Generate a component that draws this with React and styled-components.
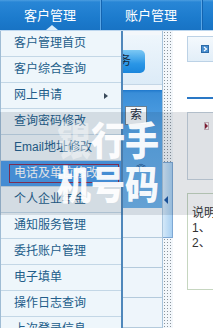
import React from 'react';
import styled, { createGlobalStyle } from 'styled-components';

const GlobalStyle = createGlobalStyle`
  html, body {
    margin: 0;
    padding: 0;
    background: #f3f7fb;
    overflow: hidden;
  }
  body {
    font-family: "Liberation Sans", "Noto Sans CJK SC", sans-serif;
    font-size: 12px;
  }
`;

const menuItems = [
  { label: '客户管理首页' },
  { label: '客户综合查询' },
  { label: '网上申请', sub: true },
  { label: '查询密码修改' },
  { label: 'Email地址修改' },
  { label: '电话及单位修改', active: true },
  { label: '个人企业年金' },
  { label: '通知服务管理' },
  { label: '委托账户管理' },
  { label: '电子填单' },
  { label: '操作日志查询' },
  { label: '上次登录信息' },
];

const App = () => (
  <Page>
    <GlobalStyle />
    <NavBar>
      <Tab $current>客户管理</Tab>
      <Tab>账户管理</Tab>
      <Tab />
    </NavBar>
    <Body>
      <Sidebar>
        <TopBox>
          <BlueButton>服务</BlueButton>
        </TopBox>
        <SearchPanel>
          <SearchButton>索</SearchButton>
          <Chevron>︽</Chevron>
          <Chevron $down>︾</Chevron>
        </SearchPanel>
        <TableRow />
        <TableRow />
        <TableRow />
        <TableRow />
      </Sidebar>
      <Splitter>
        <Handle>
          <LeftArrow />
        </Handle>
      </Splitter>
      <Main>
        <ToolBox>
          <GoIcon>
            <svg width="8" height="8" viewBox="0 0 8 8">
              <rect x="0.5" y="0.5" width="7" height="7" fill="#4a8fd0" stroke="#2a6aa8" />
              <path d="M3 2 L5.5 4 L3 6" stroke="#fff" strokeWidth="1.2" fill="none" />
            </svg>
          </GoIcon>
        </ToolBox>
        <BlueRule />
        <InfoBox>
          <MarkIcon />
        </InfoBox>
        <NoteBox>
          <NoteLine>说明：</NoteLine>
          <NoteLine>1、</NoteLine>
          <NoteLine>2、</NoteLine>
        </NoteBox>
      </Main>
    </Body>

    <Menu>
      {menuItems.map((item) => (
        <MenuItem key={item.label} $active={item.active}>
          <ItemLabel $active={item.active}>{item.label}</ItemLabel>
          {item.sub && <SubArrow />}
        </MenuItem>
      ))}
    </Menu>

    <Shade />
    <Watermark>
      <WmLine>
        <Faint>银</Faint>行手
      </WmLine>
      <WmLine>机号码</WmLine>
    </Watermark>
  </Page>
);

export default App;

const Page = styled.div`
  position: relative;
  width: 213px;
  height: 328px;
  overflow: hidden;
  background: #f3f7fb;
`;

const NavBar = styled.div`
  display: flex;
  height: 31px;
  background: linear-gradient(#4b9de0 0, #2886d6 2px, #1c7bcd 60%, #1873c4 100%);
  border-bottom: 1px solid #bcd6ee;
  box-sizing: border-box;
`;

const Tab = styled.div`
  position: relative;
  width: 101px;
  flex: none;
  display: flex;
  align-items: center;
  justify-content: center;
  padding-bottom: 2px;
  box-sizing: border-box;
  color: #fff;
  font-size: 13px;
  border-right: 1px solid #5aa6e6;
  box-shadow: 1px 0 0 #1464b0;

  &:after {
    content: ${(p) => (p.$current ? "''" : 'none')};
    position: absolute;
    left: 46px;
    bottom: 0;
    border-left: 6px solid transparent;
    border-right: 6px solid transparent;
    border-bottom: 5px solid #d8ecfa;
  }
`;

const Body = styled.div`
  display: flex;
  height: 297px;
`;

const Sidebar = styled.div`
  width: 163px;
  flex: none;
  display: flex;
  flex-direction: column;
  padding-top: 4px;
  box-sizing: border-box;
  border-right: 1px solid #a8c4dc;
`;

const TopBox = styled.div`
  height: 51px;
  display: flex;
  align-items: flex-start;
  padding-top: 15px;
  box-sizing: border-box;
  background: linear-gradient(#eef6fc, #dcebf7);
  border-bottom: 1px solid #c4d6e6;
`;

const BlueButton = styled.div`
  margin-left: 100px;
  width: 45px;
  height: 23px;
  border-radius: 5px;
  background: linear-gradient(#7cc8f4, #2a96e6 60%, #1a86dc);
  color: #1a2a3a;
  font-size: 12px;
  line-height: 23px;
  text-align: right;
  padding-right: 14px;
  box-sizing: border-box;
`;

const SearchPanel = styled.div`
  margin-top: 5px;
  height: 122px;
  display: flex;
  flex-direction: column;
  align-items: flex-end;
  padding: 16px 14px 0 0;
  box-sizing: border-box;
  background: linear-gradient(#1f78cc 0, #3a8ed8 3px, #5aa6e6 40%, #6fb2ea);
  border-left: 2px solid #1d6cb8;
`;

const SearchButton = styled.div`
  width: 20px;
  height: 17px;
  border: 1px solid #6b7f90;
  background: #f4f8fb;
  color: #1a2a3a;
  font-size: 12px;
  line-height: 17px;
  text-align: center;
  margin-right: 1px;
`;

const Chevron = styled.div`
  font-size: 10px;
  color: #14407a;
  line-height: 10px;
  margin-right: 2px;
  margin-top: ${(p) => (p.$down ? '24px' : '34px')};
`;

const TableRow = styled.div`
  height: 29px;
  flex: none;
  border-bottom: 1px solid #b4cadc;
  background: #eef5fb;
`;

const Splitter = styled.div`
  width: 10px;
  flex: none;
  padding-top: 131px;
  box-sizing: border-box;
  background-image: radial-gradient(circle, #8a949c 0.7px, transparent 0.9px);
  background-size: 3px 3px;
`;

const Handle = styled.div`
  height: 76px;
  display: flex;
  align-items: center;
  justify-content: flex-start;
  padding-left: 1px;
  box-sizing: border-box;
  background: linear-gradient(90deg, #d4e8f8, #a8d0f2);
  border: 1px solid #7ea8d4;
  border-left: none;
`;

const LeftArrow = styled.span`
  border-right: 4px solid #1a56a4;
  border-top: 4px solid transparent;
  border-bottom: 4px solid transparent;
`;

const Main = styled.div`
  flex: 1;
  display: flex;
  flex-direction: column;
  padding: 5px 0 0 14px;
  box-sizing: border-box;
  background: #fff;
`;

const ToolBox = styled.div`
  height: 26px;
  display: flex;
  align-items: center;
  padding-left: 13px;
  box-sizing: border-box;
  background: linear-gradient(#f4f9fd, #e2eef8);
  border: 1px solid #bcd2e6;
  border-right: none;
`;

const GoIcon = styled.span`
  display: flex;
`;

const BlueRule = styled.div`
  margin-top: 35px;
  height: 2px;
  background: #2a78c6;
`;

const InfoBox = styled.div`
  margin-top: 13px;
  height: 68px;
  padding: 9px 0 0 16px;
  box-sizing: border-box;
  border: 1px solid #c8d4de;
  border-right: none;
  background: #fbfcfd;
`;

const MarkIcon = styled.div`
  width: 3px;
  height: 6px;
  border: 1px solid #d0b8c0;
  background: #fff;
  position: relative;

  &:after {
    content: '';
    position: absolute;
    left: 0;
    top: 0;
    border-left: 3px solid #8a1a30;
    border-top: 3px solid transparent;
    border-bottom: 3px solid transparent;
  }
`;

const NoteBox = styled.div`
  margin-top: 13px;
  height: 97px;
  padding: 12px 0 0 4px;
  box-sizing: border-box;
  border: 1px solid #c6d6c0;
  border-right: none;
  color: #333;
  font-size: 12px;
`;

const NoteLine = styled.div`
  line-height: 15px;
  white-space: nowrap;
`;

const Menu = styled.div`
  position: absolute;
  top: 31px;
  left: 0;
  width: 123px;
  background: #eef6fb;
  border-left: 1px solid #9fbcd4;
  border-right: 2px solid #4f87bb;
  box-sizing: border-box;
`;

const MenuItem = styled.div`
  height: 26px;
  display: flex;
  align-items: center;
  padding: 0 2px 0 8px;
  box-sizing: border-box;
  border-bottom: 1px solid #c3d7e6;
  background: ${(p) => (p.$active ? '#4a9ae8' : 'transparent')};
`;

const ItemLabel = styled.span`
  flex: 1;
  height: 17px;
  line-height: 17px;
  padding-left: 4px;
  border: 1px solid ${(p) => (p.$active ? '#8a2d52' : 'transparent')};
  color: ${(p) => (p.$active ? '#fff' : '#225d8a')};
  font-size: 12px;
  white-space: nowrap;
  overflow: hidden;
`;

const SubArrow = styled.span`
  margin-right: 11px;
  border-left: 4px solid #3a4a5a;
  border-top: 3px solid transparent;
  border-bottom: 3px solid transparent;
`;

const Shade = styled.div`
  position: absolute;
  left: 0;
  right: 0;
  top: 112px;
  height: 103px;
  background: rgba(30, 50, 70, 0.13);
  pointer-events: none;
`;

const Watermark = styled.div`
  position: absolute;
  left: 57px;
  top: 117px;
  color: rgba(255, 255, 255, 0.95);
  font-family: "Noto Sans CJK SC", sans-serif;
  font-weight: 900;
  font-size: 34px;
  transform: scaleY(1.12);
  transform-origin: top left;
  pointer-events: none;
`;

const WmLine = styled.div`
  line-height: 39px;
  height: 39px;
  white-space: nowrap;
`;

const Faint = styled.span`
  opacity: 0.45;
`;
